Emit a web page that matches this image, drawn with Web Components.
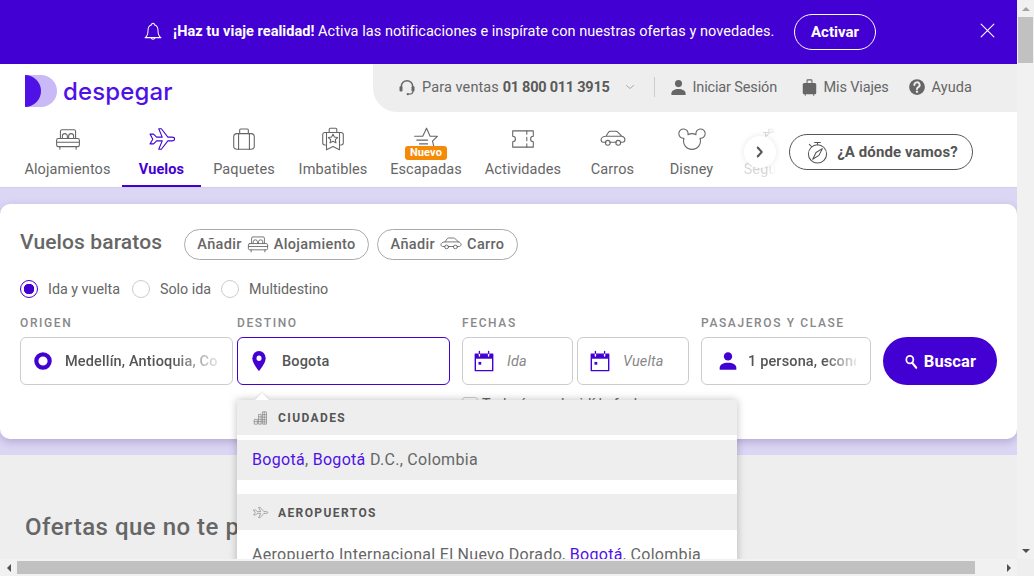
<!DOCTYPE html>
<html lang="es">
<head>
<meta charset="utf-8">
<title>Despegar - Vuelos baratos</title>
<style>
  html, body { margin: 0; height: 100%; overflow: hidden; background: #eee; }
  body { font-family: Roboto, "Liberation Sans", sans-serif; color: #666; }
</style>
</head>
<body>
<app-shell>
  <promo-banner></promo-banner>
  <top-bar></top-bar>
  <nav-bar></nav-bar>
  <search-band></search-band>
  <offers-section></offers-section>
</app-shell>

<script>
// Iconos dibujados a mano, todos en una caja de 24x24.
const ICONOS = {
  bell: '<path d="M12 2.5a1.6 1.6 0 0 1 1.6 1.9C16.6 5.2 18 7.8 18 11c0 4 1 6.300 3.500 8H2.500C5 17.300 6 15 6 11c0-3.200 1.400-5.800 4.400-6.600A1.600 1.600 0 0 1 12 2.500Z"/><path d="M9.800 19.300a2.300 2.300 0 0 0 4.400 0"/>',
  close: '<path d="M3 3l18 18M21 3L3 21"/>',
  headset: '<path stroke-width="2" d="M4.500 13v-2a7.500 7.500 0 0 1 15 0v2"/><rect class="f" x="2" y="11" width="4" height="7" rx="1.500"/><rect class="f" x="18" y="11" width="4" height="7" rx="1.500"/><path stroke-width="1.500" d="M20 17.500c0 2.500-2.500 4-6 4"/><circle class="f" cx="13" cy="21.500" r="1.500"/>',
  chevron: '<path stroke-width="2" d="M5 9l7 6 7-6"/>',
  user: '<circle class="f" cx="12" cy="6.500" r="5"/><path class="f" d="M2 22.500v-2.300c0-4 4.500-6.200 10-6.200s10 2.200 10 6.200v2.300Z"/>',
  bag: '<rect class="f" x="2.500" y="6.500" width="19" height="15" rx="2"/><path stroke-width="1.500" d="M8.500 7V3.500a1 1 0 0 1 1-1h5a1 1 0 0 1 1 1V7M6 21.500v1.500M18 21.500v1.500"/>',
  help: '<circle class="f" cx="12" cy="12" r="10.500"/><path stroke="#eee" stroke-width="2.600" d="M8.500 9.300a3.500 3.500 0 1 1 5.200 3c-1.200.7-1.700 1.300-1.700 2.400"/><circle cx="12" cy="18.200" r="1.600" fill="#eee" stroke="none"/>',
  bed: '<path d="M5 11.500V5a1.500 1.500 0 0 1 1.500-1.500h11A1.500 1.500 0 0 1 19 5v6.500"/><path d="M6.800 11.500V9.300a2.300 2.300 0 0 1 4.600 0v2.200M12.600 11.500V9.300a2.300 2.300 0 0 1 4.600 0v2.200"/><rect x="1.500" y="11.500" width="21" height="7.500" rx="1.500"/><path d="M1.500 15h21M4.500 19v2.500M19.500 19v2.500"/>',
  plane: '<path d="M1 7.500h3.200L7 10.300h5.200L9 2.500h2.400l6 7.800H21c3.500 0 3.500 3.400 0 3.400h-3.600l-6 7.800H9l3.200-7.800H7l-2.800 2.800H1l2.500-4.300Z"/>',
  suitcase: '<rect x="2.500" y="7" width="19" height="14.500" rx="3"/><path d="M8 7V3.800a1 1 0 0 1 1-1h6a1 1 0 0 1 1 1V7M7 7v14.500M17 7v14.500"/>',
  deal: '<path d="M5 17.500H4.500a2 2 0 0 1-2-2V8a2 2 0 0 1 2-2h15a2 2 0 0 1 2 2v7.500a2 2 0 0 1-2 2H19"/><path d="M8.500 6V3a1 1 0 0 1 1-1h5a1 1 0 0 1 1 1v3M6 6v16l6-3 6 3V6"/><path d="M12 7.500l1.300 2.700 3 .4-2.200 2 .6 3-2.700-1.500-2.700 1.500.6-3-2.200-2 3-.4Z"/>',
  star: '<path d="M1.500 9.500H9L12.500 2l3.300 7.500h6.700L18 14l1.500 6"/><path d="M3.500 13h10M6 16.500h7.500M8 20h5"/>',
  ticket: '<path d="M2.500 4.500h19v5a2.500 2.500 0 0 0 0 5v5h-19v-5a2.500 2.500 0 0 0 0-5Z"/><path d="M15.500 4.500v3M15.500 10.500v3M15.500 16.500v3"/>',
  car: '<path d="M5.500 9.500L8 5.500c.3-.5.8-.7 1.300-.7h5.400c.6 0 1.100.2 1.500.6l4 4.100c1.600.4 2.800 1.800 2.800 3.200 0 1.200-1 2.300-2.300 2.300H19M5.500 15H3c-1.200 0-2-1-2-2.200 0-1.700 1.800-3.300 4.500-3.300h15M9 15h6"/><circle cx="7.200" cy="15.500" r="2.200"/><circle cx="16.800" cy="15.500" r="2.200"/>',
  mickey: '<path d="M8.300 8A4.300 4.300 0 1 0 4.600 11.300 7.800 7.800 0 1 0 19.400 11.300 4.300 4.300 0 1 0 15.700 8 7.800 7.800 0 0 0 8.300 8Z"/>',
  shield: '<path d="M8 9l3-3 3-1.500M5 6h14M7 6v8c0 3 2 5.500 5 7 3-1.500 5-4 5-7V6M10 6V3h4v3"/>',
  arrow: '<path stroke-width="4" d="M7.500 4.500l8 7.500-8 7.500"/>',
  compass: '<circle cx="12" cy="13.500" r="9.500"/><path d="M9 1.500h6M12 1.500v2.500M3.500 3.500l2.500 2.500"/><path d="M17 8L13.500 15 7 19 10.500 12Z"/>',
  ring: '<circle cx="12" cy="12" r="8" stroke-width="5"/>',
  pin: '<path class="f" d="M12 1a8 8 0 0 0-8 8c0 5.500 8 14 8 14s8-8.500 8-14a8 8 0 0 0-8-8Z"/><circle cx="12" cy="9" r="3" fill="#fff" stroke="none"/>',
  calendar: '<rect x="2.500" y="4.500" width="19" height="18" stroke-width="1.500"/><rect class="f" x="2.500" y="4.500" width="19" height="5"/><path stroke-width="1.500" stroke="#fff" d="M7 3v3.500M17 3v3.500"/><path stroke-width="1.500" d="M7 1.500v2M17 1.500v2"/><rect class="f" x="6" y="13" width="3" height="3"/>',
  search: '<circle cx="10" cy="9" r="6" stroke-width="3"/><path stroke-width="3.500" d="M14 14l7 8"/>',
  city: '<path d="M2 22V15h5v7ZM9 22V7h4v15ZM15 22V3h6.500v19ZM2 18.500h5M9 11h4M9 15h4M9 18.500h4M15 7.500h6.500M15 11.500h6.500M15 15.500h6.500M15 19h6.500M18 3v19"/>'
};

class AppIcon extends HTMLElement {
  constructor() {
    super();
    this.attachShadow({ mode: 'open' });
  }

  connectedCallback() {
    const w = this.getAttribute('w') || 24;
    const h = this.getAttribute('h') || w;
    const grueso = this.getAttribute('stroke') || 1.2;
    this.shadowRoot.innerHTML = `
      <style>
        :host { display: inline-flex; flex: none; line-height: 0; }
        svg { fill: none; stroke: currentColor; stroke-linejoin: round; stroke-linecap: round; overflow: visible; }
        .f { fill: currentColor; stroke: none; }
      </style>
      <svg width="${w}" height="${h}" viewBox="0 0 24 24" preserveAspectRatio="none" stroke-width="${grueso}">${ICONOS[this.getAttribute('name')]}</svg>
    `;
  }
}
customElements.define('app-icon', AppIcon);

// Marco de la ventana: contenido más las barras de desplazamiento.
class AppShell extends HTMLElement {
  constructor() {
    super();
    this.attachShadow({ mode: 'open' });
    this.shadowRoot.innerHTML = `
      <style>
        :host { display: grid; grid-template: 559px 17px / 1017px 17px; width: 1034px; height: 576px; }
        main { overflow: hidden; background: #eee; }
        .v, .h { background: #f1f1f1; display: flex; }
        .v { flex-direction: column; align-items: center; }
        .h { align-items: center; }
        .corner { background: #eee; }
        .cap { flex: none; width: 17px; height: 17px; display: flex; align-items: center; justify-content: center; }
        .thumb { background: #c1c1c1; }
        .v .thumb { width: 15px; height: 46px; }
        .h .thumb { height: 13px; width: 958px; }
        .gap { flex: 1; }
        i { width: 0; height: 0; border: 4px solid transparent; display: block; }
        .up { border-bottom-color: #a3a3a3; margin-top: -4px; }
        .down { border-top-color: #505050; margin-top: 4px; }
        .left { border-right-color: #505050; margin-left: -4px; }
        .right { border-left-color: #505050; margin-left: 4px; }
      </style>
      <main><slot></slot></main>
      <div class="v">
        <div class="cap"><i class="up"></i></div>
        <div class="thumb"></div>
        <div class="gap"></div>
        <div class="cap"><i class="down"></i></div>
      </div>
      <div class="h">
        <div class="cap"><i class="left"></i></div>
        <div class="thumb"></div>
        <div class="gap"></div>
        <div class="cap"><i class="right"></i></div>
      </div>
      <div class="corner"></div>
    `;
  }
}
customElements.define('app-shell', AppShell);

class PromoBanner extends HTMLElement {
  constructor() {
    super();
    this.attachShadow({ mode: 'open' });
    this.shadowRoot.innerHTML = `
      <style>
        :host { display: flex; align-items: center; height: 64px; padding-left: 143px; background: #4300d2; color: #fff; font-size: 14.5px; box-sizing: border-box; }
        app-icon { margin-right: 10px; margin-bottom: 2px; }
        b { font-weight: 700; }
        p { margin: 0 0 2px; white-space: nowrap; width: 601px; letter-spacing: .05px; }
        button { all: unset; margin-left: 20px; width: 80px; height: 34px; line-height: 34px; border: 1px solid #fff; border-radius: 18px; text-align: center; font-size: 15px; font-weight: 700; }
        .x { margin-left: 103px; margin-bottom: 4px; }
      </style>
      <app-icon name="bell" w="20" h="21"></app-icon>
      <p><b>¡Haz tu viaje realidad!</b> Activa las notificaciones e inspírate con nuestras ofertas y novedades.</p>
      <button>Activar</button>
      <app-icon class="x" name="close" w="17" stroke="1.500"></app-icon>
    `;
  }
}
customElements.define('promo-banner', PromoBanner);

class TopBar extends HTMLElement {
  constructor() {
    super();
    this.attachShadow({ mode: 'open' });
    this.shadowRoot.innerHTML = `
      <style>
        :host { display: flex; justify-content: space-between; height: 48px; background: #fff; }
        .logo { display: flex; align-items: center; gap: 6px; padding: 6px 0 0 25px; }
        .logo span { font: 500 24px Inter, "Noto Sans", sans-serif; color: #4f12e6; letter-spacing: .15px; }
        .tools { width: 644px; box-sizing: border-box; padding: 0 0 2px 25px; display: flex; align-items: center; background: #eee; border-bottom-left-radius: 24px; font-size: 14.500px; color: #666; white-space: nowrap; }
        .tools span { margin-left: 6px; letter-spacing: .1px; }
        .tools span.t { letter-spacing: -.15px; }
        b { font-weight: 700; color: #5a5a5a; letter-spacing: -.25px; }
        .chev { margin-left: 14px; color: #aaa; }
        .sep { width: 1px; height: 20px; background: #ccc; margin: 0 15px 0 18px; }
      </style>
      <div class="logo">
        <svg width="32" height="32" viewBox="0 0 32 32"><path fill="#c9b9f7" d="M0 0h16a16 16 0 0 1 0 32H0Z"/><path fill="#4f12e6" d="M0 0a16 16 0 0 1 0 32Z"/></svg>
        <span>despegar</span>
      </div>
      <div class="tools">
        <app-icon name="headset" w="18"></app-icon>
        <span>Para ventas <b>01 800 011 3915</b></span>
        <app-icon class="chev" name="chevron" w="12"></app-icon>
        <div class="sep"></div>
        <app-icon name="user" w="17" h="17"></app-icon>
        <span class="t" style="width:86px">Iniciar Sesión</span>
        <app-icon name="bag" w="17" h="18" style="margin-left:22px"></app-icon>
        <span class="t" style="width:63px">Mis Viajes</span>
        <app-icon name="help" w="18" style="margin-left:21px"></app-icon>
        <span>Ayuda</span>
      </div>
    `;
  }
}
customElements.define('top-bar', TopBar);

class NavItem extends HTMLElement {
  constructor() {
    super();
    this.attachShadow({ mode: 'open' });
  }

  connectedCallback() {
    const insignia = this.hasAttribute('badge') ? `<em>${this.getAttribute('badge')}</em>` : '';
    this.shadowRoot.innerHTML = `
      <style>
        :host { display: flex; flex-direction: column; align-items: center; box-sizing: border-box; height: 75px; padding-top: 14px; position: relative; color: #666; font-size: 14.500px; white-space: nowrap; letter-spacing: .1px; }
        :host([active]) { color: #4300d2; font-weight: 700; border-bottom: 2px solid #4300d2; }
        span { margin-top: 9px; line-height: 17px; }
        em { position: absolute; top: 34px; left: 50%; transform: translateX(-50%); background: #f58a07; color: #fff; font: 700 11px/14px Roboto, sans-serif; padding: 0 5px; border-radius: 3px; }
      </style>
      <app-icon name="${this.getAttribute('icon')}" w="26" h="26" stroke="1"></app-icon>
      ${insignia}
      <span><slot></slot></span>
    `;
  }
}
customElements.define('nav-item', NavItem);

class NavBar extends HTMLElement {
  constructor() {
    super();
    this.attachShadow({ mode: 'open' });
    this.shadowRoot.innerHTML = `
      <style>
        :host { display: flex; position: relative; height: 76px; background: #fff; border-bottom: 1px solid #d4cfe8; box-sizing: border-box; }
        .items { display: grid; grid-template-columns: 109px 79px 86px 92px 94px 100px 79px 79px 79px; width: 762px; margin-left: 13px; overflow: hidden; flex: none; }
        .fade { opacity: .25; -webkit-mask-image: linear-gradient(90deg, #000 45%, transparent 58%); }
        .next { position: absolute; left: 744px; top: 24px; width: 32px; height: 32px; border-radius: 50%; background: #fff; box-shadow: 0 0 6px rgba(0,0,0,.1); display: flex; align-items: center; justify-content: center; color: #555; }
        button { all: unset; box-sizing: border-box; margin: 22px 0 0 14px; width: 184px; height: 36px; border: 1px solid #555; border-radius: 18px; display: flex; align-items: center; justify-content: center; gap: 8px; font-size: 15px; font-weight: 700; color: #555; letter-spacing: .1px; white-space: nowrap; padding-left: 2px; }
      </style>
      <div class="items">
        <nav-item icon="bed">Alojamientos</nav-item>
        <nav-item icon="plane" active>Vuelos</nav-item>
        <nav-item icon="suitcase">Paquetes</nav-item>
        <nav-item icon="deal">Imbatibles</nav-item>
        <nav-item icon="star" badge="Nuevo">Escapadas</nav-item>
        <nav-item icon="ticket">Actividades</nav-item>
        <nav-item icon="car">Carros</nav-item>
        <nav-item icon="mickey">Disney</nav-item>
        <nav-item class="fade" icon="shield">Seguros</nav-item>
      </div>
      <div class="next"><app-icon name="arrow" w="12" h="14"></app-icon></div>
      <button><app-icon name="compass" w="23" stroke="1.100"></app-icon>¿A dónde vamos?</button>
    `;
  }
}
customElements.define('nav-bar', NavBar);

class AddPill extends HTMLElement {
  constructor() {
    super();
    this.attachShadow({ mode: 'open' });
  }

  connectedCallback() {
    this.shadowRoot.innerHTML = `
      <style>
        :host { display: inline-flex; align-items: center; justify-content: center; gap: 5px; box-sizing: border-box; height: 31px; border: 1px solid #aaa; border-radius: 16px; font-size: 14.500px; font-weight: 500; color: #666; white-space: nowrap; letter-spacing: .35px; width: ${this.getAttribute('width')}px; padding-bottom: 1px; }
      </style>
      Añadir <app-icon name="${this.getAttribute('icon')}" w="22" h="20" stroke="1"></app-icon> <slot></slot>
    `;
  }
}
customElements.define('add-pill', AddPill);

class RadioOption extends HTMLElement {
  constructor() {
    super();
    this.attachShadow({ mode: 'open' });
    this.shadowRoot.innerHTML = `
      <style>
        :host { display: inline-flex; align-items: center; gap: 10px; font-size: 14.300px; color: #666; }
        i { width: 16px; height: 16px; border: 1px solid #ccc; border-radius: 50%; display: block; flex: none; background: #fff; }
        :host([checked]) i { border-color: #4300d2; background: radial-gradient(circle, #4300d2 0 5px, #fff 5.500px); }
      </style>
      <i></i><slot></slot>
    `;
  }
}
customElements.define('radio-option', RadioOption);

// Caja de un campo del buscador, con icono y texto recortado en degradado.
class SearchField extends HTMLElement {
  constructor() {
    super();
    this.attachShadow({ mode: 'open' });
  }

  connectedCallback() {
    const iw = this.getAttribute('iw') || 24;
    const ih = this.getAttribute('ih') || iw;
    this.shadowRoot.innerHTML = `
      <style>
        :host { display: flex; align-items: center; box-sizing: border-box; height: 48px; border: 1px solid #ccc; border-radius: 6px; background: #fff; padding: 0 14px 0 var(--pad, 12px); font-size: 14.500px; font-weight: 500; color: #555; overflow: hidden; white-space: nowrap; letter-spacing: .15px; }
        :host([focused]) { border-color: #4300d2; }
        :host([placeholder]) { font-weight: 400; font-style: italic; color: #888; }
        app-icon { color: #4300d2; margin-right: var(--gap, 12px); }
        div { flex: 1; min-width: 0; overflow: hidden; }
        :host([fade]) div { -webkit-mask-image: linear-gradient(90deg, #000 70%, rgba(0,0,0,.15) 100%); }
      </style>
      <app-icon name="${this.getAttribute('icon')}" w="${iw}" h="${ih}"></app-icon>
      <div><slot></slot></div>
    `;
  }
}
customElements.define('search-field', SearchField);

class FieldGroup extends HTMLElement {
  constructor() {
    super();
    this.attachShadow({ mode: 'open' });
  }

  connectedCallback() {
    this.shadowRoot.innerHTML = `
      <style>
        :host { display: block; flex: none; }
        label { display: block; height: 14px; line-height: 14px; margin-bottom: 7px; font-size: 12px; font-weight: 500; letter-spacing: 1.620px; color: #888; white-space: nowrap; }
      </style>
      <label>${this.getAttribute('label')}</label>
      <slot></slot>
    `;
  }
}
customElements.define('field-group', FieldGroup);

class SuggestionList extends HTMLElement {
  constructor() {
    super();
    this.attachShadow({ mode: 'open' });
    this.shadowRoot.innerHTML = `
      <style>
        :host { display: block; position: absolute; left: 237px; top: 196px; width: 500px; background: #fff; box-shadow: 0 0 8px rgba(0,0,0,.25); color: #666; font-size: 16px; }
        :host::before { content: ""; position: absolute; left: 20px; top: -5px; width: 10px; height: 10px; background: #fff; transform: rotate(45deg); box-shadow: -1px -1px 2px rgba(0,0,0,.08); }
        .head { position: relative; display: flex; align-items: center; gap: 10px; height: 35px; padding-left: 16px; background: #eee; font-size: 12px; font-weight: 700; letter-spacing: 1.400px; color: #555; }
        .head app-icon { color: #777; }
        .head + .row { margin-top: 5px; }
        .row { height: 40px; line-height: 40px; padding-left: 15px; white-space: nowrap; letter-spacing: .3px; }
        .row.sel { background: #eee; margin-bottom: 14px; }
        mark { background: none; color: #4f12e6; }
        .air { height: 50px; line-height: 50px; margin-top: 0 !important; }
      </style>
      <div class="head"><app-icon name="city" w="15" h="15" stroke="1"></app-icon>CIUDADES</div>
      <div class="row sel"><mark>Bogotá</mark>, <mark>Bogotá</mark> D.C., Colombia</div>
      <div class="head" style="height:36px;padding-top:1px;box-sizing:border-box"><app-icon name="plane" w="15" h="13" stroke="1"></app-icon>AEROPUERTOS</div>
      <div class="row air">Aeropuerto Internacional El Nuevo Dorado, <mark>Bogotá</mark>, Colombia</div>
    `;
  }
}
customElements.define('suggestion-list', SuggestionList);

class SearchBand extends HTMLElement {
  constructor() {
    super();
    this.attachShadow({ mode: 'open' });
    this.shadowRoot.innerHTML = `
      <style>
        :host { display: block; background: #dcd6f5; padding: 16px 0; }
        .card { position: relative; height: 235px; box-sizing: border-box; padding: 25px 20px 0; background: #fff; border-radius: 10px; box-shadow: 0 3px 8px rgba(40,20,90,.22); }
        .title { display: flex; align-items: center; height: 31px; gap: 8px; }
        h1 { margin: 0 16px 6px 0; font-size: 21px; font-weight: 500; color: #666; letter-spacing: .12px; white-space: nowrap; width: 140px; }
        .radios { display: flex; align-items: center; margin-top: 20px; height: 18px; gap: 10px; }
        .form { display: flex; margin-top: 18px; }
        .dates { display: grid; grid-template-columns: 111px 112px; gap: 4px; }
        .check { display: flex; align-items: center; gap: 4px; margin-top: 11px; font-size: 14.500px; color: #666; white-space: nowrap; }
        .check i { width: 14px; height: 14px; border: 1px solid #ccc; border-radius: 3px; display: block; }
        button { all: unset; box-sizing: border-box; align-self: flex-start; margin: 21px 0 0 12px; width: 114px; height: 48px; border-radius: 24px; background: #4300d2; color: #fff; display: flex; align-items: center; justify-content: center; gap: 6px; font-size: 16.500px; font-weight: 700; letter-spacing: .1px; }
      </style>
      <div class="card">
        <div class="title">
          <h1>Vuelos baratos</h1>
          <add-pill icon="bed" width="185">Alojamiento</add-pill>
          <add-pill icon="car" width="141">Carro</add-pill>
        </div>
        <div class="radios">
          <radio-option checked>Ida y vuelta</radio-option>
          <radio-option style="margin-left:2px">Solo ida</radio-option>
          <radio-option>Multidestino</radio-option>
        </div>
        <div class="form">
          <field-group label="ORIGEN" style="width:213px;margin-right:4px">
            <search-field icon="ring" iw="20" fade style="--gap:12px">Medellín, Antioquia, Colombia</search-field>
          </field-group>
          <field-group label="DESTINO" style="width:213px;margin-right:12px">
            <search-field icon="pin" iw="20" ih="22" focused style="--pad:11px;--gap:13px">Bogota</search-field>
          </field-group>
          <field-group label="FECHAS" style="width:227px;margin-right:12px">
            <div class="dates">
              <search-field icon="calendar" iw="22" placeholder style="--pad:10px">Ida</search-field>
              <search-field icon="calendar" iw="22" placeholder style="--pad:11px">Vuelta</search-field>
            </div>
            <div class="check"><i></i>Todavía no decidí la fecha</div>
          </field-group>
          <field-group label="PASAJEROS Y CLASE" style="width:170px">
            <search-field icon="user" iw="20" fade style="--pad:16px;--gap:10px">1 persona, económica</search-field>
          </field-group>
          <button><app-icon name="search" w="14" h="15"></app-icon>Buscar</button>
        </div>
        <suggestion-list></suggestion-list>
      </div>
    `;
  }
}
customElements.define('search-band', SearchBand);

class OffersSection extends HTMLElement {
  constructor() {
    super();
    this.attachShadow({ mode: 'open' });
    this.shadowRoot.innerHTML = `
      <style>
        :host { display: block; padding: 57px 25px 0; }
        h2 { margin: 0; font-size: 24px; line-height: 30px; font-weight: 500; color: #666; letter-spacing: .5px; white-space: nowrap; }
      </style>
      <h2>Ofertas que no te puedes perder</h2>
    `;
  }
}
customElements.define('offers-section', OffersSection);
</script>
</body>
</html>
